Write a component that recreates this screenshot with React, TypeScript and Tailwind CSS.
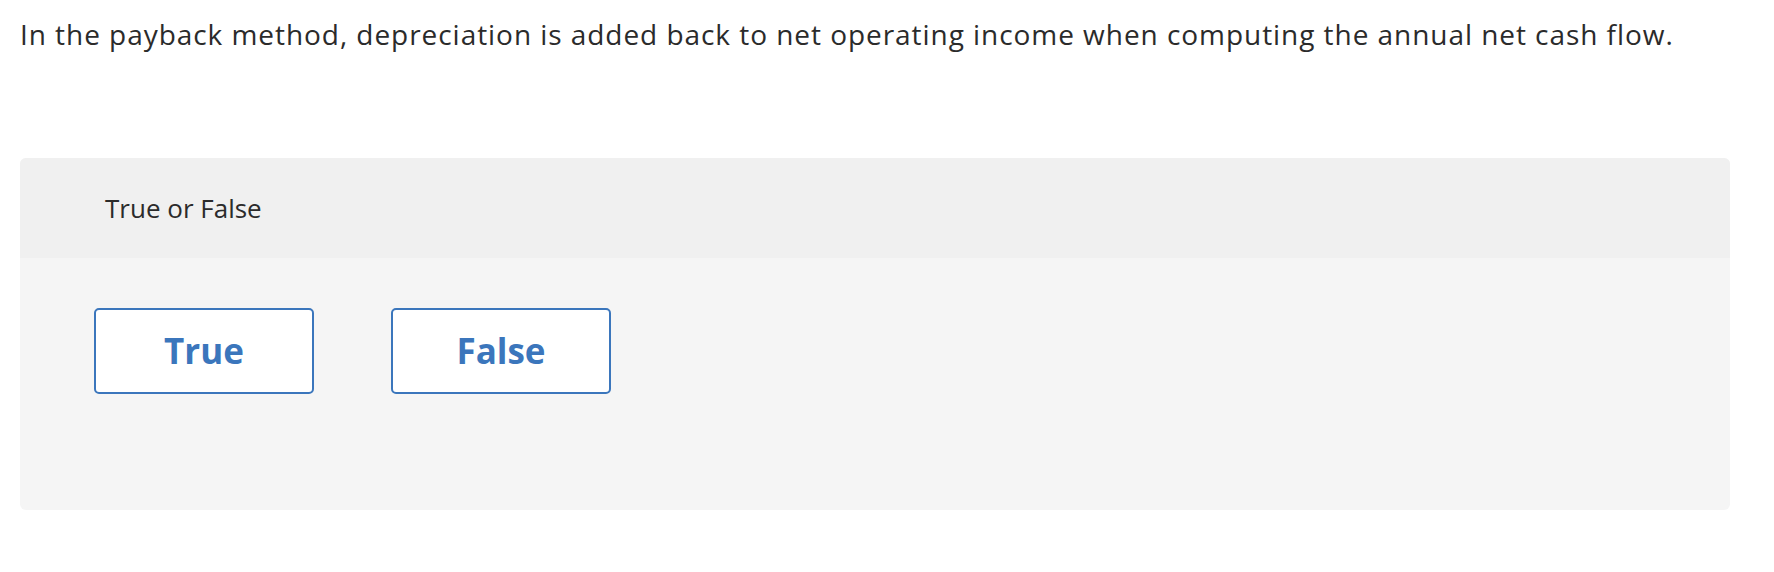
export default function App() {
  return (
    <div className="min-h-screen bg-white px-[20px] pt-[14px] text-[#2b2b2b]" style={{ fontFamily: "'Open Sans', 'Noto Sans', sans-serif" }}>
      <p className="text-[28px] leading-[40px] tracking-[0.95px]">
        In the payback method, depreciation is added back to net operating income when computing the annual net cash flow.
      </p>

      <div className="mt-[104px] w-[1710px] overflow-hidden rounded-md bg-[#f5f5f5]">
        <div className="flex h-[100px] items-center bg-[#f0f0f0] pl-[85px] text-[26px]">True or False</div>
        <div className="flex h-[252px] items-start gap-[77px] pl-[74px] pt-[50px]">
          <button className="h-[86px] w-[220px] rounded-[5px] border-2 border-[#3b76bc] bg-white text-[35px] font-bold text-[#3b76bc]">
            True
          </button>
          <button className="h-[86px] w-[220px] rounded-[5px] border-2 border-[#3b76bc] bg-white text-[35px] font-bold text-[#3b76bc]">
            False
          </button>
        </div>
      </div>
    </div>
  )
}
